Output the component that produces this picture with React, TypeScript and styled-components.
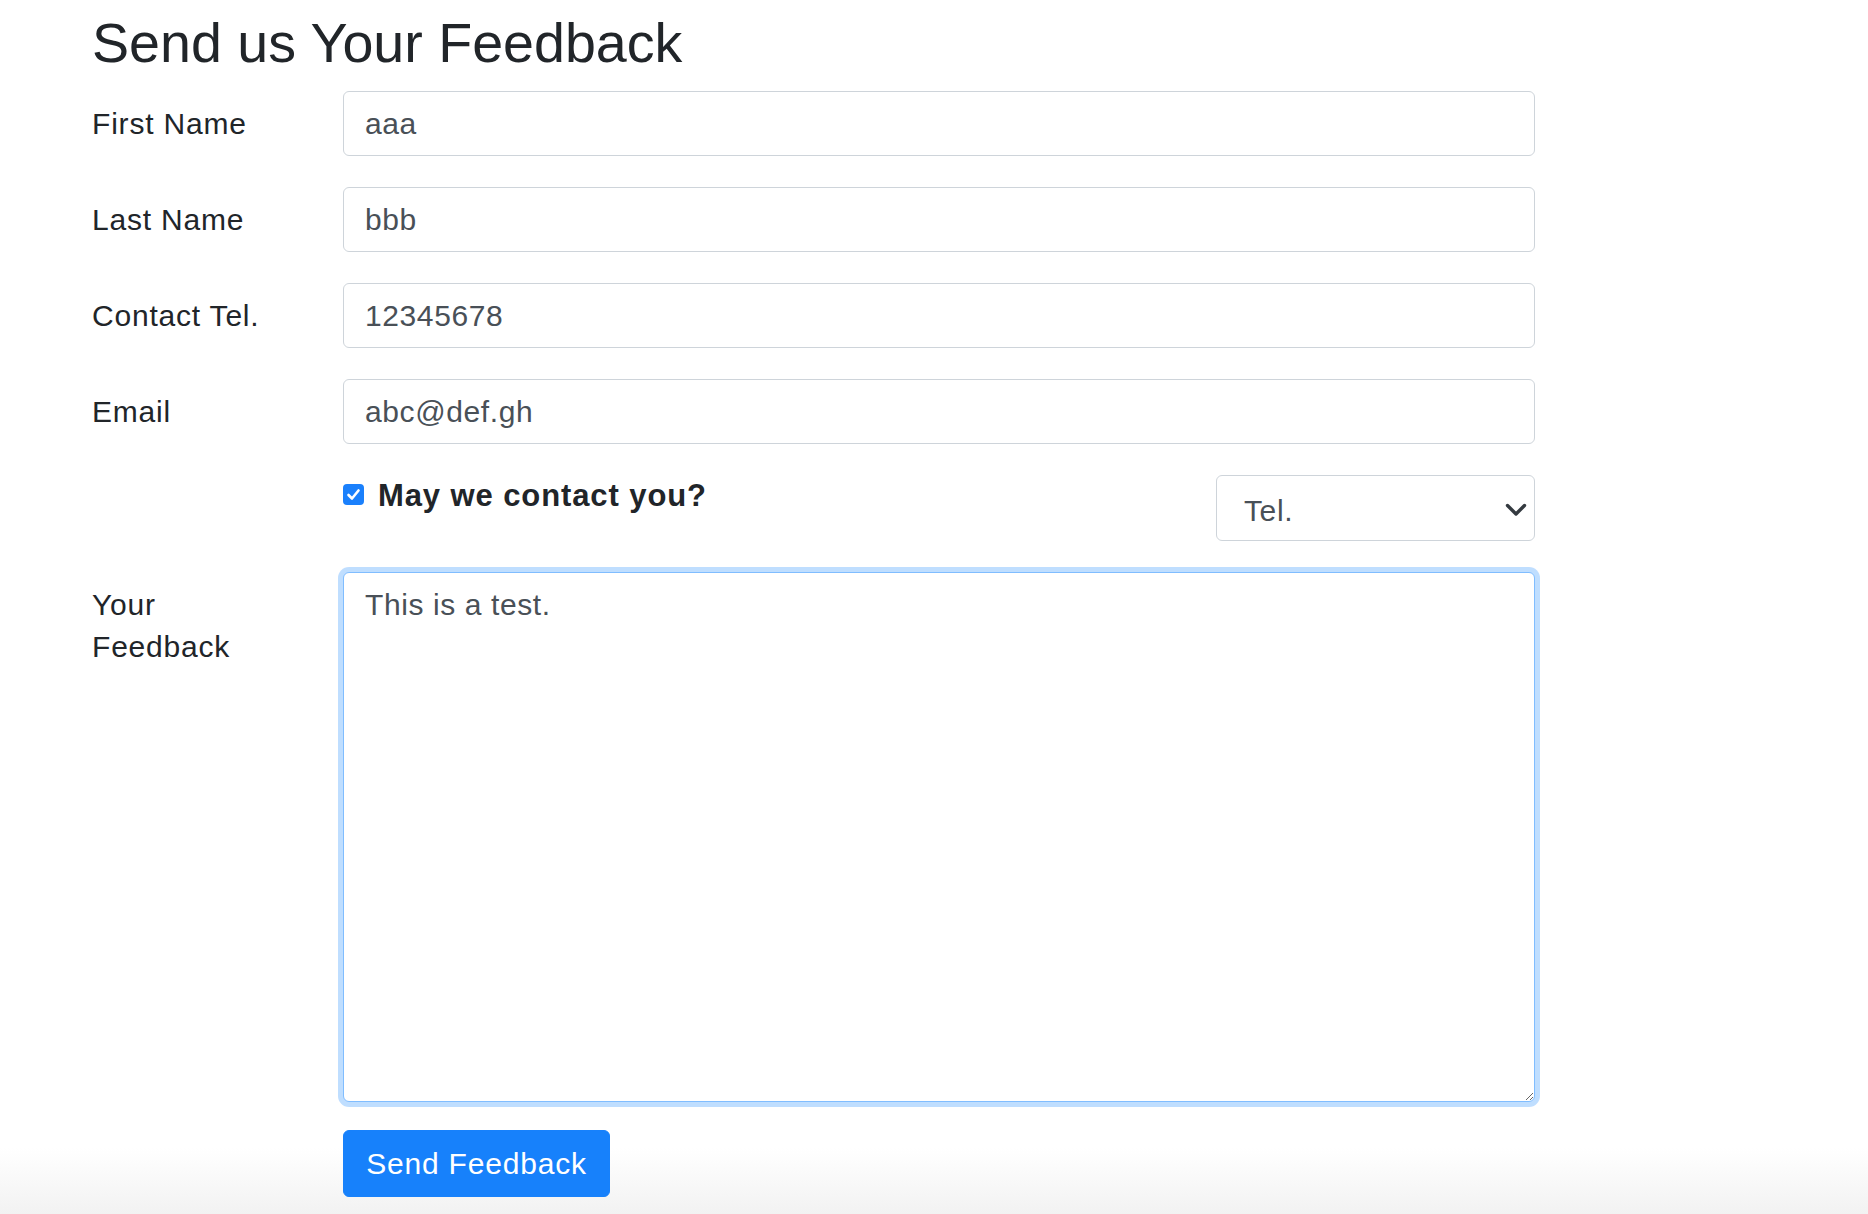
import React from "react";
import styled, { createGlobalStyle } from "styled-components";

const Global = createGlobalStyle`
  html, body { margin: 0; padding: 0; height: 100%; }
  body {
    font-family: "Liberation Sans", Arial, sans-serif;
    color: #212529;
    background: linear-gradient(180deg, #ffffff 0, #ffffff calc(100% - 66px), #f2f2f2 100%);
    min-height: 100vh;
  }
  #root { min-height: 100vh; }
  * { box-sizing: border-box; }
`;

const Page = styled.main`
  padding: 10px 0 0 92px;
`;

const Title = styled.h2`
  margin: 0 0 15px;
  font-size: 55.6px;
  font-weight: 400;
  line-height: 66px;
  color: #212529;
`;

const Form = styled.form`
  display: flex;
  flex-direction: column;
  gap: 31px;
`;

const Row = styled.div<{ $tight?: boolean }>`
  display: grid;
  grid-template-columns: 251px 1192px;
  margin-top: ${(p) => (p.$tight ? "-3px" : "0")};
`;

const Label = styled.label`
  display: block;
  max-width: 175px;
  padding-top: 12px;
  font-size: 30px;
  line-height: 42px;
  letter-spacing: 0.8px;
  color: #212529;
`;

const fieldBase = `
  width: 100%;
  border: 1px solid #ced4da;
  border-radius: 6px;
  background: #fff;
  color: #495057;
  font-family: "Liberation Sans", Arial, sans-serif;
  font-size: 30px;
  line-height: 42px;
  letter-spacing: 0.6px;
  outline: none;
`;

const Input = styled.input`
  ${fieldBase}
  height: 65px;
  padding: 0 21px;
`;

const TextArea = styled.textarea`
  ${fieldBase}
  height: 530px;
  padding: 11px 21px;
  border-color: #80bdff;
  box-shadow: 0 0 0 5px rgba(0, 123, 255, 0.25);
  resize: vertical;
`;

const ContactLine = styled.div`
  display: flex;
  justify-content: space-between;
  align-items: flex-start;
`;

const CheckLabel = styled.label`
  display: flex;
  align-items: flex-start;
  gap: 14px;
  font-size: 31px;
  font-weight: 700;
  line-height: 42px;
  letter-spacing: 0.9px;
  color: #212529;
  cursor: pointer;
`;

const CheckBox = styled.span`
  flex: none;
  width: 21px;
  height: 21px;
  margin-top: 9px;
  border-radius: 4px;
  background: #1a80fc;
  display: flex;
  align-items: center;
  justify-content: center;
`;

const SelectWrap = styled.div`
  position: relative;
  width: 319px;
`;

const Select = styled.select`
  ${fieldBase}
  appearance: none;
  -webkit-appearance: none;
  height: 66px;
  padding: 5px 50px 0 27px;
`;

const Chevron = styled.svg`
  position: absolute;
  right: 8px;
  top: 28px;
  pointer-events: none;
`;

const Button = styled.button`
  width: 267px;
  height: 67px;
  border: 1px solid #1781fb;
  border-radius: 6px;
  background: #1781fb;
  color: #fff;
  font-family: "Liberation Sans", Arial, sans-serif;
  font-size: 30px;
  line-height: 42px;
  letter-spacing: 0.8px;
  padding: 0;
  cursor: pointer;
`;

export default function App() {
  return (
    <>
      <Global />
      <Page>
        <Title>Send us Your Feedback</Title>
        <Form onSubmit={(e) => e.preventDefault()}>
          <Row>
            <Label htmlFor="firstname">First Name</Label>
            <Input id="firstname" defaultValue="aaa" />
          </Row>
          <Row>
            <Label htmlFor="lastname">Last Name</Label>
            <Input id="lastname" defaultValue="bbb" />
          </Row>
          <Row>
            <Label htmlFor="tel">Contact Tel.</Label>
            <Input id="tel" defaultValue="12345678" />
          </Row>
          <Row>
            <Label htmlFor="email">Email</Label>
            <Input id="email" defaultValue="abc@def.gh" />
          </Row>
          <Row>
            <div />
            <ContactLine>
              <CheckLabel>
                <CheckBox>
                  <svg width="15" height="15" viewBox="0 0 15 15">
                    <polyline
                      points="2.5,8 6,11.5 12.5,3.5"
                      fill="none"
                      stroke="#fff"
                      strokeWidth="2.6"
                      strokeLinecap="round"
                      strokeLinejoin="round"
                    />
                  </svg>
                </CheckBox>
                May we contact you?
              </CheckLabel>
              <SelectWrap>
                <Select defaultValue="Tel.">
                  <option>Tel.</option>
                  <option>Email</option>
                </Select>
                <Chevron width="22" height="14" viewBox="0 0 22 14">
                  <path
                    d="M2.5 2.5l8.5 8.5 8.5-8.5"
                    fill="none"
                    stroke="#343a40"
                    strokeWidth="3.4"
                    strokeLinecap="round"
                    strokeLinejoin="round"
                  />
                </Chevron>
              </SelectWrap>
            </ContactLine>
          </Row>
          <Row>
            <Label htmlFor="feedback">Your Feedback</Label>
            <TextArea id="feedback" defaultValue="This is a test." />
          </Row>
          <Row $tight>
            <div />
            <div>
              <Button type="submit">Send Feedback</Button>
            </div>
          </Row>
        </Form>
      </Page>
    </>
  );
}
